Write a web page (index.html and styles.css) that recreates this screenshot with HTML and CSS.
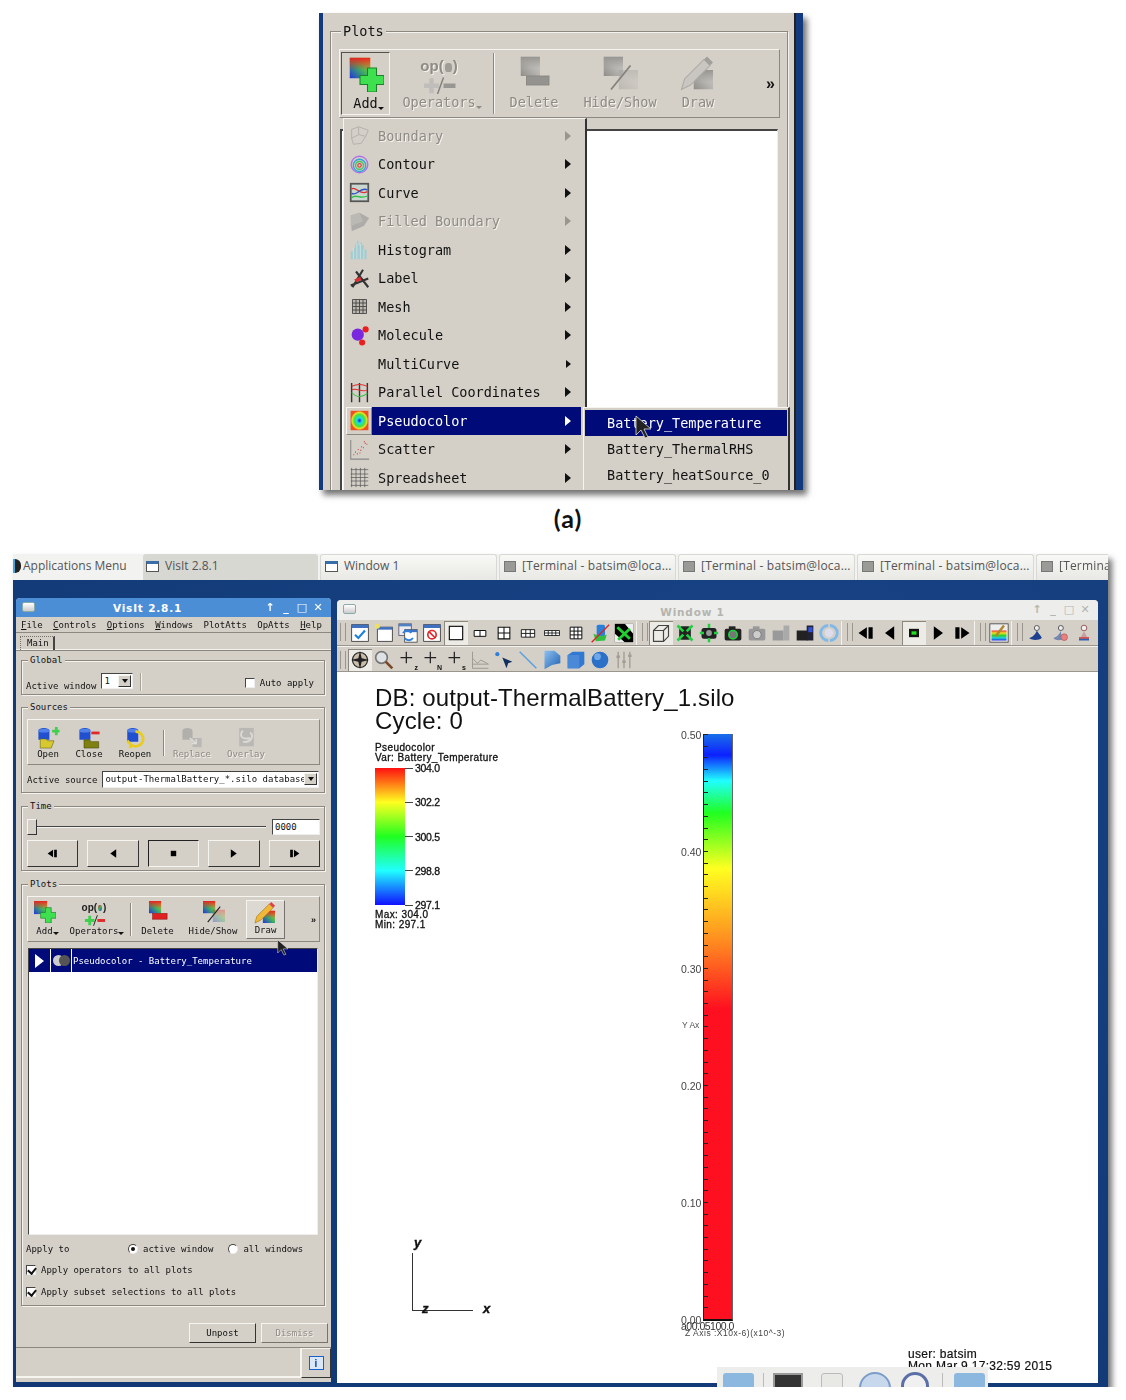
FILE: index.html
```html
<!DOCTYPE html>
<html lang="en">
<head>
    <meta charset="UTF-8">
    <title>VisIt plots</title>
    <link rel="stylesheet" href="styles.css">
</head>
<body>
    <!-- shared icons -->
    <svg class="defs" xmlns="http://www.w3.org/2000/svg">
        <defs>
            <linearGradient id="gx" x1="0" y1="1" x2="1" y2="0"><stop offset="0" stop-color="#2030e0"/><stop offset=".5" stop-color="#40b060"/><stop offset="1" stop-color="#f0c020"/></linearGradient>
            <linearGradient id="gy" x1="0" y1="0" x2="0" y2="1"><stop offset="0" stop-color="#e82020"/><stop offset=".6" stop-color="#e82020" stop-opacity="0"/></linearGradient>
            <radialGradient id="gp"><stop offset="0" stop-color="#1020e0"/><stop offset=".3" stop-color="#20e0e0"/><stop offset=".6" stop-color="#40e040"/><stop offset=".85" stop-color="#e8e020"/><stop offset="1" stop-color="#f05020"/></radialGradient>
            <linearGradient id="gb" x1="0" y1="0" x2="1" y2="1"><stop offset="0" stop-color="#8cc0f0"/><stop offset="1" stop-color="#2060b0"/></linearGradient>
            <linearGradient id="gr" x1="0" y1="0" x2="0" y2="1"><stop offset="0" stop-color="#f03030"/><stop offset=".25" stop-color="#f0e020"/><stop offset=".5" stop-color="#30d030"/><stop offset=".75" stop-color="#20d0e0"/><stop offset="1" stop-color="#2030e0"/></linearGradient>
        </defs>
        <symbol id="swatch" viewBox="0 0 14 14"><rect width="14" height="14" fill="url(#gx)"/><rect width="14" height="14" fill="url(#gy)"/></symbol>
        <symbol id="i-add" viewBox="0 0 24 24"><use href="#swatch" x="1" y="1" width="14" height="14"/><path d="M13 8h6v5h5v6h-5v5h-6v-5H8v-6h5z" fill="#3fe050" stroke="#1c8028" stroke-width=".7"/></symbol>
        <symbol id="i-op" viewBox="0 0 24 12"><path d="M2 5h3.500V1.500h3V5H12v3H8.500v3.500h-3V8H2z" fill="#3fd050"/><path d="M11 12l4-11" stroke="#222" stroke-width="1"/><path d="M15 5h8v3h-8z" fill="#e02828"/></symbol>
        <symbol id="i-del" viewBox="0 0 24 24"><use href="#swatch" x="3" y="1" width="13" height="13"/><rect x="7" y="14" width="15" height="6" fill="#e02020" stroke="#901010" stroke-width=".6"/></symbol>
        <symbol id="i-hide" viewBox="0 0 24 24"><use href="#swatch" x="1" y="1" width="13" height="13"/><use href="#swatch" x="11" y="10" width="13" height="13" opacity=".35"/><path d="M6 23L19 7" stroke="#222" stroke-width="1.2"/></symbol>
        <symbol id="i-draw" viewBox="0 0 24 24"><use href="#swatch" x="9" y="10" width="13" height="13"/><path d="M1 23l2-7L16 3l4 4L7 20z" fill="#f0b838" stroke="#a87820" stroke-width=".7"/><path d="M16 3l2-2 4 4-2 2z" fill="#e04040"/></symbol>
        <symbol id="m-bound" viewBox="0 0 24 24"><path d="M3 5l8-3 11 4-3 7-5 8-9 1-2-7zM3 15l8-4 8 2M11 2v9" fill="none" stroke="#8e8a84" stroke-width="1.1"/></symbol>
        <symbol id="m-contour" viewBox="0 0 24 24"><circle cx="12" cy="12" r="9.5" fill="none" stroke="#b070e8" stroke-width="1.6"/><circle cx="12" cy="13" r="7" fill="none" stroke="#30a8d8" stroke-width="1.6"/><circle cx="12" cy="13" r="4.5" fill="none" stroke="#50c060" stroke-width="1.6"/><circle cx="12" cy="13" r="2" fill="none" stroke="#e04040" stroke-width="1.4"/></symbol>
        <symbol id="m-curve" viewBox="0 0 24 24"><rect x="2" y="2" width="20" height="20" fill="#c8d8d0" stroke="#555" stroke-width="2"/><path d="M3 8c5-4 8 8 18 3" fill="none" stroke="#e03030" stroke-width="1.5"/><path d="M3 13c6 4 9-8 18-4" fill="none" stroke="#3050c0" stroke-width="1.5"/><path d="M3 18c5-5 9 2 18-2" fill="none" stroke="#30c040" stroke-width="1.5"/></symbol>
        <symbol id="m-filled" viewBox="0 0 24 24"><path d="M2 5l10-3 11 6-6 9-14 6z" fill="#84807a"/><path d="M2 5l10-3 4 10-14 5z" fill="#a09c96"/></symbol>
        <symbol id="m-hist" viewBox="0 0 24 24"><path d="M2 23v-9h3v-4h2v-5h2v-3h2v5h2V4h2v3h2v5h3v11z" fill="#a4ccd0"/><path d="M5 23V10M9 23V5M13 23V6M17 23V12" stroke="#d8e8e8" stroke-width=".8"/></symbol>
        <symbol id="m-label" viewBox="0 0 24 24"><path d="M4 22L16 2M8 4l14 18M2 20l20-8" stroke="#333" stroke-width="2.4" fill="none"/><path d="M6 13l7-3 1 4-6 2z" fill="#d83030"/></symbol>
        <symbol id="m-mesh" viewBox="0 0 24 24"><path d="M4 4h16v16H4zM4 8h16M4 12h16M4 16h16M8 4v16M12 4v16M16 4v16" fill="#bdb9b1" stroke="#444" stroke-width="1"/></symbol>
        <symbol id="m-mol" viewBox="0 0 24 24"><circle cx="10" cy="11" r="7" fill="#7a28e0"/><circle cx="19" cy="5" r="3.5" fill="#e82020"/><circle cx="15" cy="20" r="3.5" fill="#e82020"/></symbol>
        <symbol id="m-par" viewBox="0 0 24 24"><path d="M3 1v22M12 1v22M21 1v22" stroke="#333" stroke-width="1.6"/><path d="M3 5c6-3 12-3 18 0M3 9c6-3 12 4 18 0" stroke="#e03030" stroke-width="1.2" fill="none"/><path d="M3 12c6 6 12 6 18 1" stroke="#30c040" stroke-width="1.2" fill="none"/></symbol>
        <symbol id="m-pseudo" viewBox="0 0 24 24"><rect x="2" y="1" width="20" height="22" fill="#f05020"/><rect x="2" y="1" width="20" height="22" fill="url(#gp)"/></symbol>
        <symbol id="m-scat" viewBox="0 0 24 24"><path d="M2 1v22h21" stroke="#888" stroke-width="1.2" fill="none"/><path d="M5 18h1M7 15h1M9 17h1M10 12h1M13 13h1M14 9h1M16 10h1M18 5h1M20 6h1M12 16h1M17 3h1" stroke="#c83838" stroke-width="1.4"/></symbol>
        <symbol id="m-sheet" viewBox="0 0 24 24"><path d="M2 3h20M2 8h20M2 12h20M2 16h20M2 21h20M3 1v22M8 1v22M13 1v22M18 1v22" stroke="#555" stroke-width=".8"/></symbol>
        <symbol id="s-open" viewBox="0 0 24 24"><path d="M1 4c0-4 12-4 12 0v10H1z" fill="#2050d0"/><ellipse cx="7" cy="4" rx="6" ry="2" fill="#5080e8"/><path d="M3 13h6l2 2h7l-3 8H3z" fill="#d8c830" stroke="#606010" stroke-width=".6"/><path d="M16 3h3V0h3v3h2v3h-2v3h-3V6h-3z" fill="#40d050"/></symbol>
        <symbol id="s-close" viewBox="0 0 24 24"><path d="M1 4c0-4 12-4 12 0v10H1z" fill="#2050d0"/><ellipse cx="7" cy="4" rx="6" ry="2" fill="#5080e8"/><path d="M6 14h6l2 2h8v7H6z" fill="#808010" stroke="#404008" stroke-width=".6"/><path d="M14 5h9v3h-9z" fill="#e02828"/></symbol>
        <symbol id="s-reopen" viewBox="0 0 24 24"><path d="M3 4c0-4 12-4 12 0v12H3z" fill="#2050d0"/><ellipse cx="9" cy="4" rx="6" ry="2" fill="#5080e8"/><path d="M12 5a8 8 0 1 1-5 14M7 19l-4-4M7 19l-1 4" fill="none" stroke="#e8cc20" stroke-width="3"/></symbol>
        <symbol id="s-replace" viewBox="0 0 24 24"><path d="M1 4c0-4 11-4 11 0v10H1z" fill="#8e8a84"/><rect x="12" y="12" width="10" height="10" fill="#a09c96"/><path d="M9 12l7 6m0-5v5h-5" stroke="#eee" stroke-width="1.6" fill="none"/></symbol>
        <symbol id="s-overlay" viewBox="0 0 24 24"><rect x="4" y="1" width="16" height="20" fill="#a09c96"/><path d="M8 4c-5 6 0 10 8 8m0-6c5 4 0 12-8 10" stroke="#e8e6e0" stroke-width="2" fill="none"/></symbol>
        <symbol id="t-first" viewBox="0 0 24 24"><path d="M13 5v14L3 12zM15 5h5v14h-5z"/></symbol>
        <symbol id="t-prev" viewBox="0 0 24 24"><path d="M17 4v16L6 12z"/></symbol>
        <symbol id="t-stop" viewBox="0 0 24 24"><path d="M7 7h10v10H7z"/></symbol>
        <symbol id="t-next" viewBox="0 0 24 24"><path d="M7 4v16l11-8z"/></symbol>
        <symbol id="t-last" viewBox="0 0 24 24"><path d="M11 5v14l10-7zM4 5h5v14H4z"/></symbol>
        <symbol id="v-stop" viewBox="0 0 24 24"><rect x="6" y="7" width="12" height="10" fill="#111"/><rect x="9" y="10" width="6" height="4" fill="#20e020"/></symbol>
        <symbol id="v-check" viewBox="0 0 24 24"><rect x="2" y="2" width="20" height="20" fill="#fff" stroke="#333"/><rect x="2" y="2" width="20" height="4" fill="#4070c0"/><path d="M6 14l4 4 8-9" fill="none" stroke="#2080e0" stroke-width="2.6"/></symbol>
        <symbol id="v-new" viewBox="0 0 24 24"><rect x="4" y="5" width="18" height="17" fill="#fff" stroke="#333"/><rect x="4" y="5" width="18" height="3" fill="#4070c0"/><circle cx="4" cy="4" r="3" fill="#f0e060"/></symbol>
        <symbol id="v-copy" viewBox="0 0 24 24"><rect x="1" y="1" width="15" height="14" fill="#e8eaf0" stroke="#557"/><rect x="1" y="1" width="15" height="3" fill="#5080c0"/><rect x="8" y="8" width="15" height="15" fill="#fff" stroke="#444"/><rect x="8" y="8" width="15" height="3" fill="#4070c0"/><path d="M6 12a6 6 0 0 1 10 0M18 18a6 6 0 0 1-10 0" fill="none" stroke="#3080e0" stroke-width="2.2"/></symbol>
        <symbol id="v-clear" viewBox="0 0 24 24"><rect x="2" y="2" width="20" height="20" fill="#fff" stroke="#333"/><rect x="2" y="2" width="20" height="4" fill="#4070c0"/><circle cx="12" cy="14" r="5" fill="none" stroke="#e02828" stroke-width="2"/><path d="M8 10l8 8" stroke="#e02828" stroke-width="2"/></symbol>
        <symbol id="l-1" viewBox="0 0 24 24"><rect x="4" y="4" width="16" height="16" fill="#fff" stroke="#111" stroke-width="1.4"/></symbol>
        <symbol id="l-2" viewBox="0 0 24 24"><path d="M5 9h14v7H5zM12 9v7" fill="#fff" stroke="#111" stroke-width="1.2"/></symbol>
        <symbol id="l-4" viewBox="0 0 24 24"><path d="M5 5h14v14H5zM12 5v14M5 12h14" fill="#fff" stroke="#111" stroke-width="1.3"/></symbol>
        <symbol id="l-6" viewBox="0 0 24 24"><path d="M4 8h16v9H4zM4 12.500h16M9.300 8v9M14.700 8v9" fill="#fff" stroke="#111" stroke-width="1.1"/></symbol>
        <symbol id="l-8" viewBox="0 0 24 24"><path d="M3 9h18v6H3zM3 12h18M7.500 9v6M12 9v6M16.500 9v6" fill="#fff" stroke="#111"/></symbol>
        <symbol id="l-9" viewBox="0 0 24 24"><path d="M5 5h14v14H5zM5 9.700h14M5 14.300h14M9.700 5v14M14.300 5v14" fill="#fff" stroke="#111" stroke-width="1.2"/></symbol>
        <symbol id="v-spin" viewBox="0 0 24 24"><rect x="8" y="2" width="10" height="14" rx="2" fill="#2a80d8"/><path d="M4 13l8 3 8-2-2 7-11 1z" fill="#30c040"/><path d="M2 23L23 2" stroke="#e02020" stroke-width="1.6"/></symbol>
        <symbol id="v-inv" viewBox="0 0 24 24"><rect x="1" y="1" width="22" height="22" fill="#000"/><path d="M23 1v12L13 1zM1 23h12L1 13z" fill="#eee"/><path d="M4 5l15 14M19 7L5 20" stroke="#20d030" stroke-width="3.4"/></symbol>
        <symbol id="v-cube" viewBox="0 0 24 24"><path d="M3 9l6-6h12v13l-6 6H3zM3 9h12v13M15 9l6-6" fill="none" stroke="#444" stroke-width="1.4"/></symbol>
        <symbol id="c-1" viewBox="0 0 24 24"><rect x="5" y="4" width="14" height="16" rx="3" fill="#222"/><path d="M3 3l7 7M21 3l-7 7M3 21l7-7M21 21l-7-7" stroke="#20d040" stroke-width="3.2"/></symbol>
        <symbol id="c-2" viewBox="0 0 24 24"><rect x="3" y="6" width="18" height="13" rx="3" fill="#222"/><circle cx="12" cy="12" r="3.500" fill="#999"/><path d="M12 1v5M12 18v5M1 12h5M18 12h5" stroke="#20d040" stroke-width="3"/></symbol>
        <symbol id="c-3" viewBox="0 0 24 24"><rect x="2" y="7" width="20" height="14" rx="2" fill="#222"/><rect x="7" y="4" width="8" height="4" fill="#222"/><circle cx="12" cy="14" r="5" fill="#777" stroke="#20d040" stroke-width="2"/></symbol>
        <symbol id="c-4" viewBox="0 0 24 24"><rect x="2" y="7" width="20" height="14" rx="2" fill="#999"/><rect x="7" y="4" width="8" height="4" fill="#999"/><circle cx="12" cy="14" r="5" fill="#ccc" stroke="#777"/></symbol>
        <symbol id="c-5" viewBox="0 0 24 24"><rect x="2" y="9" width="13" height="12" fill="#999"/><rect x="15" y="3" width="7" height="18" fill="#aaa"/></symbol>
        <symbol id="c-6" viewBox="0 0 24 24"><rect x="2" y="9" width="13" height="12" fill="#222"/><rect x="14" y="3" width="8" height="18" fill="#223"/><rect x="16" y="5" width="5" height="6" fill="#3050e0"/></symbol>
        <symbol id="c-7" viewBox="0 0 24 24"><path d="M13 3a9 9 0 0 1 0 18M11 21a9 9 0 0 1 0-18" fill="none" stroke="#80b8e8" stroke-width="3.4"/><circle cx="12" cy="12" r="5" fill="#dde"/></symbol>
        <symbol id="v-paint" viewBox="0 0 24 24"><rect x="1" y="1" width="22" height="22" fill="#eee" stroke="#444"/><rect x="3" y="9" width="18" height="12" fill="url(#gr)"/><path d="M8 16L18 3" stroke="#b08830" stroke-width="3"/></symbol>
        <symbol id="p-1" viewBox="0 0 24 24"><circle cx="13" cy="6" r="3" fill="#eee" stroke="#444"/><path d="M13 9c-1 4-5 8-9 9 2 3 12 3 15 0-1-3-4-5-6-9z" fill="#1c3f90"/></symbol>
        <symbol id="p-2" viewBox="0 0 24 24"><circle cx="13" cy="6" r="3" fill="#eee" stroke="#444"/><path d="M13 9c-1 4-5 8-9 9 2 3 8 3 10 2l-1-11z" fill="#7488b0"/><circle cx="17" cy="17" r="4" fill="#e88080" stroke="#a04040" stroke-width=".6"/></symbol>
        <symbol id="p-3" viewBox="0 0 24 24"><circle cx="12" cy="6" r="3.400" fill="#eee" stroke="#844"/><path d="M12 10l-4 7h8z" fill="#c8a0a0"/><path d="M6 17h12v2H6z" fill="#d03030"/><path d="M6 19h12v2H6z" fill="#3060b0"/></symbol>
        <symbol id="n-compass" viewBox="0 0 24 24"><circle cx="12" cy="12" r="9" fill="#c8bda8" stroke="#222" stroke-width="1.4"/><path d="M12 1l2 9 9 2-9 2-2 9-2-9-9-2 9-2z" fill="#222"/></symbol>
        <symbol id="n-mag" viewBox="0 0 24 24"><circle cx="9" cy="9" r="7" fill="#dfe2e4" stroke="#777" stroke-width="2"/><path d="M14 14l8 8" stroke="#7a4a28" stroke-width="3.2"/></symbol>
        <symbol id="n-plus" viewBox="0 0 24 24"><path d="M10 2v14M3 9h14" stroke="#222" stroke-width="1.5"/></symbol>
        <symbol id="n-graph" viewBox="0 0 24 24"><path d="M3 2v20h19M3 10l6 6 4-4 9 5M3 17h19" stroke="#9a968e" stroke-width="1.1" fill="none"/></symbol>
        <symbol id="n-pick" viewBox="0 0 24 24"><circle cx="4" cy="5" r="2.500" fill="#3080d8"/><path d="M10 9l12 5-5 2-2 6z" fill="#113060"/></symbol>
        <symbol id="n-line" viewBox="0 0 24 24"><path d="M2 2l20 20" stroke="#58a0e0" stroke-width="1.8"/></symbol>
        <symbol id="n-plane" viewBox="0 0 24 24"><path d="M3 1h12l7 6v9l-10 2-9 5z" fill="url(#gb)"/></symbol>
        <symbol id="n-box" viewBox="0 0 24 24"><path d="M2 6l6-4h14v15l-6 5H2z" fill="#3078d0"/><path d="M2 6h14v16H2z" fill="#4a88d8"/></symbol>
        <symbol id="n-ball" viewBox="0 0 24 24"><circle cx="12" cy="12" r="10" fill="#2c70c8"/><circle cx="9" cy="8" r="4" fill="#70a8e8"/></symbol>
        <symbol id="n-slide" viewBox="0 0 24 24"><path d="M5 2v20M12 2v20M19 2v20" stroke="#a09c94" stroke-width="1.6"/><path d="M3 8h4M10 14h4M17 7h4" stroke="#a09c94" stroke-width="3"/></symbol>
        <symbol id="cursor" viewBox="0 0 16 24"><path d="M1 1v19l5-5 4 8 3-1-4-8h7z" fill="#222" stroke="#ddd" stroke-width=".8"/></symbol>
    </svg>

    <!-- (a) plots menu -->
    <div class="shot shot-top">
        <div class="shot-inner">
            <div class="top-panel">
                <div class="group top-group">
                    <span class="legend">Plots</span>
                    <div class="toolbar top-toolbar">
                        <div class="tb tb-pressed top-add"><svg class="ic"><use href="#i-add"/></svg><span class="drop">Add</span></div>
                        <div class="tb off top-ops"><span class="op-text">op(<i></i>)</span><svg class="op-ic"><use href="#i-op"/></svg><span class="drop">Operators</span></div>
                        <i class="tb-sep"></i>
                        <div class="tb off top-del"><svg class="ic"><use href="#i-del"/></svg><span>Delete</span></div>
                        <div class="tb off top-hide"><svg class="ic"><use href="#i-hide"/></svg><span>Hide/Show</span></div>
                        <div class="tb off top-draw"><svg class="ic"><use href="#i-draw"/></svg><span>Draw</span></div>
                        <b class="more">»</b>
                    </div>
                    <div class="plot-list top-list"></div>
                </div>
            </div>

            <div class="menu">
                <div class="mrow off"><span class="mico"><svg><use href="#m-bound"/></svg></span><span class="mbody">Boundary<i class="arrow"></i></span></div>
                <div class="mrow"><span class="mico"><svg><use href="#m-contour"/></svg></span><span class="mbody">Contour<i class="arrow"></i></span></div>
                <div class="mrow"><span class="mico"><svg><use href="#m-curve"/></svg></span><span class="mbody">Curve<i class="arrow"></i></span></div>
                <div class="mrow off"><span class="mico"><svg><use href="#m-filled"/></svg></span><span class="mbody">Filled Boundary<i class="arrow"></i></span></div>
                <div class="mrow"><span class="mico"><svg><use href="#m-hist"/></svg></span><span class="mbody">Histogram<i class="arrow"></i></span></div>
                <div class="mrow"><span class="mico"><svg><use href="#m-label"/></svg></span><span class="mbody">Label<i class="arrow"></i></span></div>
                <div class="mrow"><span class="mico"><svg><use href="#m-mesh"/></svg></span><span class="mbody">Mesh<i class="arrow"></i></span></div>
                <div class="mrow"><span class="mico"><svg><use href="#m-mol"/></svg></span><span class="mbody">Molecule<i class="arrow"></i></span></div>
                <div class="mrow"><span class="mico"></span><span class="mbody">MultiCurve<i class="arrow arrow-sm"></i></span></div>
                <div class="mrow"><span class="mico"><svg><use href="#m-par"/></svg></span><span class="mbody">Parallel Coordinates<i class="arrow"></i></span></div>
                <div class="mrow sel"><span class="mico"><svg><use href="#m-pseudo"/></svg></span><span class="mbody">Pseudocolor<i class="arrow"></i></span></div>
                <div class="mrow"><span class="mico"><svg><use href="#m-scat"/></svg></span><span class="mbody">Scatter<i class="arrow"></i></span></div>
                <div class="mrow"><span class="mico"><svg><use href="#m-sheet"/></svg></span><span class="mbody">Spreadsheet<i class="arrow"></i></span></div>
            </div>

            <div class="submenu">
                <div class="subrow sel">Battery_Temperature</div>
                <div class="subrow">Battery_ThermalRHS</div>
                <div class="subrow">Battery_heatSource_0</div>
            </div>
            <svg class="cursor cursor-top"><use href="#cursor"/></svg>
        </div>
    </div>

    <div class="caption">(a)</div>

    <!-- desktop with the main window and the viewer -->
    <div class="shot shot-bot">
        <div class="shot-inner desktop">
            <div class="taskbar">
                <div class="task task-apps"><i class="apps-logo"></i>Applications Menu</div>
                <div class="task active"><i class="task-win"></i>VisIt 2.8.1</div>
                <div class="task"><i class="task-win"></i>Window 1</div>
                <div class="task term"><i class="task-term"></i>[Terminal - batsim@loca...</div>
                <div class="task term"><i class="task-term"></i>[Terminal - batsim@loca...</div>
                <div class="task term"><i class="task-term"></i>[Terminal - batsim@loca...</div>
                <div class="task term task-last"><i class="task-term"></i>[Terminal - batsim@loca...</div>
            </div>

            <div class="window visit-win">
                <div class="titlebar">
                    <i class="win-icon"></i>
                    <span class="title-text">VisIt 2.8.1</span>
                    <span class="win-btns"><span>↑</span><span>_</span><span>□</span><span>✕</span></span>
                </div>
                <div class="menubar">
                    <span><u>F</u>ile</span><span><u>C</u>ontrols</span><span><u>O</u>ptions</span><span><u>W</u>indows</span><span>PlotAtts</span><span>OpAtts</span><span><u>H</u>elp</span>
                </div>
                <div class="tabs"><span class="tab">Main</span></div>

                <div class="group global">
                    <span class="legend">Global</span>
                    <span>Active window</span>
                    <span class="combo combo-win">1<i class="combo-btn"></i></span>
                    <i class="vsep"></i>
                    <label class="check-item auto"><i class="check"></i>Auto apply</label>
                </div>

                <div class="group sources">
                    <span class="legend">Sources</span>
                    <div class="toolbar src-toolbar">
                        <div class="tb src-open"><svg class="ic"><use href="#s-open"/></svg><span>Open</span></div>
                        <div class="tb src-close"><svg class="ic"><use href="#s-close"/></svg><span>Close</span></div>
                        <div class="tb src-reopen"><svg class="ic"><use href="#s-reopen"/></svg><span>Reopen</span></div>
                        <i class="tb-sep"></i>
                        <div class="tb off src-replace"><svg class="ic"><use href="#s-replace"/></svg><span>Replace</span></div>
                        <div class="tb off src-overlay"><svg class="ic"><use href="#s-overlay"/></svg><span>Overlay</span></div>
                    </div>
                    <div class="source-row">
                        <span>Active source</span>
                        <span class="combo combo-src">output-ThermalBattery_*.silo database<i class="combo-btn"></i></span>
                    </div>
                </div>

                <div class="group time">
                    <span class="legend">Time</span>
                    <div class="slider-row">
                        <i class="slider-handle"></i><i class="slider-track"></i>
                        <span class="time-field">0000</span>
                    </div>
                    <div class="transport">
                        <button class="vcr"><svg><use href="#t-first"/></svg></button>
                        <button class="vcr"><svg><use href="#t-prev"/></svg></button>
                        <button class="vcr down"><svg><use href="#t-stop"/></svg></button>
                        <button class="vcr"><svg><use href="#t-next"/></svg></button>
                        <button class="vcr"><svg><use href="#t-last"/></svg></button>
                    </div>
                </div>

                <div class="group plots">
                    <span class="legend">Plots</span>
                    <div class="toolbar plot-toolbar">
                        <div class="tb pl-add"><svg class="ic"><use href="#i-add"/></svg><span class="drop">Add</span></div>
                        <div class="tb pl-ops"><span class="op-text">op(<i></i>)</span><svg class="op-ic"><use href="#i-op"/></svg><span class="drop">Operators</span></div>
                        <i class="tb-sep"></i>
                        <div class="tb pl-del"><svg class="ic"><use href="#i-del"/></svg><span>Delete</span></div>
                        <div class="tb pl-hide"><svg class="ic"><use href="#i-hide"/></svg><span>Hide/Show</span></div>
                        <div class="tb tb-raised pl-draw"><svg class="ic"><use href="#i-draw"/></svg><span>Draw</span></div>
                        <b class="more">»</b>
                    </div>
                    <div class="plot-list">
                        <div class="plot-item">
                            <span class="plot-play"><i></i></span>
                            <span class="plot-eye"><i></i><i></i></span>
                            <span>Pseudocolor - Battery_Temperature</span>
                        </div>
                    </div>
                    <div class="apply-row">
                        <span class="apply-label">Apply to</span>
                        <label class="check-item radio-a"><i class="radio on"></i>active window</label>
                        <label class="check-item radio-b"><i class="radio"></i>all windows</label>
                    </div>
                    <div class="apply-row"><label class="check-item"><i class="check on"></i>Apply operators to all plots</label></div>
                    <div class="apply-row"><label class="check-item"><i class="check on"></i>Apply subset selections to all plots</label></div>
                </div>

                <div class="actions">
                    <button class="push">Unpost</button>
                    <button class="push off">Dismiss</button>
                </div>
                <div class="statusbar">
                    <span class="status-field"></span>
                    <span class="status-info"><i>i</i></span>
                </div>
            </div>

            <div class="window viz-win">
                <div class="titlebar viz-title">
                    <i class="win-icon"></i>
                    <span class="title-text">Window 1</span>
                    <span class="win-btns"><span>↑</span><span>_</span><span>□</span><span>✕</span></span>
                </div>
                <div class="vbar">
                    <i class="grip grip-first"></i>
                    <span class="vc"><svg><use href="#v-check"/></svg></span>
                    <span class="vc"><svg><use href="#v-new"/></svg></span>
                    <span class="vc"><svg><use href="#v-copy"/></svg></span>
                    <span class="vc"><svg><use href="#v-clear"/></svg></span>
                    <span class="vc on"><svg><use href="#l-1"/></svg></span>
                    <span class="vc"><svg><use href="#l-2"/></svg></span>
                    <span class="vc"><svg><use href="#l-4"/></svg></span>
                    <span class="vc"><svg><use href="#l-6"/></svg></span>
                    <span class="vc"><svg><use href="#l-8"/></svg></span>
                    <span class="vc"><svg><use href="#l-9"/></svg></span>
                    <span class="vc"><svg><use href="#v-spin"/></svg></span>
                    <span class="vc"><svg><use href="#v-inv"/></svg></span>
                    <i class="grip"></i>
                    <span class="vc on"><svg><use href="#v-cube"/></svg></span>
                    <span class="vc"><svg><use href="#c-1"/></svg></span>
                    <span class="vc"><svg><use href="#c-2"/></svg></span>
                    <span class="vc"><svg><use href="#c-3"/></svg></span>
                    <span class="vc"><svg><use href="#c-4"/></svg></span>
                    <span class="vc"><svg><use href="#c-5"/></svg></span>
                    <span class="vc"><svg><use href="#c-6"/></svg></span>
                    <span class="vc"><svg><use href="#c-7"/></svg></span>
                    <i class="grip"></i>
                    <span class="vc"><svg><use href="#t-first"/></svg></span>
                    <span class="vc"><svg><use href="#t-prev"/></svg></span>
                    <span class="vc on"><svg><use href="#v-stop"/></svg></span>
                    <span class="vc"><svg><use href="#t-next"/></svg></span>
                    <span class="vc"><svg><use href="#t-last"/></svg></span>
                    <i class="grip"></i>
                    <span class="vc"><svg><use href="#v-paint"/></svg></span>
                    <i class="grip"></i>
                    <span class="vc"><svg><use href="#p-1"/></svg></span>
                    <span class="vc"><svg><use href="#p-2"/></svg></span>
                    <span class="vc"><svg><use href="#p-3"/></svg></span>
                </div>
                <div class="vbar">
                    <i class="grip grip-first"></i>
                    <span class="vc on"><svg><use href="#n-compass"/></svg></span>
                    <span class="vc"><svg><use href="#n-mag"/></svg></span>
                    <span class="vc nav"><svg><use href="#n-plus"/></svg><b>z</b></span>
                    <span class="vc nav"><svg><use href="#n-plus"/></svg><b>N</b></span>
                    <span class="vc nav"><svg><use href="#n-plus"/></svg><b>s</b></span>
                    <span class="vc"><svg><use href="#n-graph"/></svg></span>
                    <span class="vc"><svg><use href="#n-pick"/></svg></span>
                    <span class="vc"><svg><use href="#n-line"/></svg></span>
                    <span class="vc"><svg><use href="#n-plane"/></svg></span>
                    <span class="vc"><svg><use href="#n-box"/></svg></span>
                    <span class="vc"><svg><use href="#n-ball"/></svg></span>
                    <span class="vc"><svg><use href="#n-slide"/></svg></span>
                </div>

                <div class="canvas">
                    <div class="db-title">DB: output-ThermalBattery_1.silo<br>Cycle: 0</div>
                    <div class="lg-head">Pseudocolor<br>Var: Battery_Temperature</div>
                    <div class="lg-bar"></div>
                    <div class="lg-ticks"><span>304.0</span><span>302.2</span><span>300.5</span><span>298.8</span><span>297.1</span></div>
                    <div class="lg-foot">Max: 304.0<br>Min: 297.1</div>

                    <div class="y-labels"><span>0.50</span><span>0.40</span><span>0.30</span><span>0.20</span><span>0.10</span><span>0.00</span></div>
                    <div class="y-title">Y Ax</div>
                    <div class="data-bar"></div>
                    <div class="x-labels">a00.05100.0</div>
                    <div class="x-title">Z Axis :X10x-6)(x10^-3)</div>

                    <i class="triad-y"></i><i class="triad-x"></i>
                    <b class="triad-lbl lbl-y">y</b><b class="triad-lbl lbl-z">z</b><b class="triad-lbl lbl-x">x</b>

                    <div class="user-info">user: batsim<br>Mon Mar 9 17:32:59 2015</div>
                </div>
            </div>

            <div class="dock">
                <i class="d-folder"></i><i class="d-sep"></i><i class="d-term"></i><i class="d-file"></i><i class="d-globe"></i><i class="d-mag"></i><i class="d-sep"></i><i class="d-folder"></i>
            </div>
            <svg class="cursor cursor-bot"><use href="#cursor"/></svg>
        </div>
    </div>
</body>
</html>
```
FILE: styles.css
```css
* {
    box-sizing: border-box;
}
body {
    margin: 0;
    background-color: #ffffff;
    font-family: "DejaVu Sans Mono", monospace;
    color: #111;
}
i {
    display: block;
    font-style: normal;
}
button {
    font: inherit;
    color: inherit;
}
.defs {
    position: absolute;
    width: 0;
    height: 0;
}

/* screenshots */
.shot {
    overflow: hidden;
    background-color: #123a7c;
    box-shadow: 4px 5px 6px rgba(0, 0, 0, 0.55);
}
.shot-inner {
    position: relative;
    width: 100%;
    height: 100%;
    filter: blur(0.45px);
}
.shot-top {
    width: 484px;
    height: 477px;
    margin: 13px 0 0 319px;
}
.shot-bot {
    width: 1095px;
    height: 833px;
    margin-left: 13px;
}
.caption {
    height: 64px;
    padding: 14px 0 0 10px;
    text-align: center;
    font: bold 25px/28px Lato, sans-serif;
    letter-spacing: 1px;
}

/* shared panel parts */
.group {
    position: relative;
    border: 1px solid #8c8880;
    box-shadow: 1px 1px 0 #f4f2ec, inset 1px 1px 0 #f4f2ec;
}
.legend {
    position: absolute;
    top: -7px;
    left: 6px;
    padding: 0 2px;
    line-height: 12px;
    background-color: #d4d0c8;
}
.toolbar {
    display: flex;
    align-items: stretch;
    border: 1px solid;
    border-color: #f6f4ef #8c8880 #8c8880 #f6f4ef;
}
.tb {
    display: flex;
    flex: none;
    flex-direction: column;
    align-items: center;
    justify-content: space-between;
}
.ic {
    display: block;
}
.off {
    color: #8f8b85;
    text-shadow: 1px 1px 0 #f4f2ec;
}
.off svg {
    filter: grayscale(1) opacity(0.45);
}
.drop {
    position: relative;
}
.drop::after {
    content: "";
    position: absolute;
    right: -6px;
    bottom: 1px;
    border: 3px solid transparent;
    border-top-color: currentColor;
    border-bottom: 0;
}
.op-text {
    display: flex;
    align-items: center;
    font-family: "Liberation Sans", sans-serif;
    font-weight: bold;
    color: #222;
}
.op-text i {
    background: linear-gradient(135deg, #d03030, #40b060, #2040d0);
    border-radius: 40%;
}
.off .op-text {
    color: #8f8b85;
}
.off .op-text i {
    background: #a09c96;
}
.tb-sep {
    flex: none;
    width: 2px;
    margin: 3px;
    background-color: #8c8880;
    border-right: 1px solid #f6f4ef;
}
.more {
    margin: auto 3px auto auto;
    font-family: "Liberation Sans", sans-serif;
}
.plot-list {
    background-color: #ffffff;
    border: 1px solid;
    border-color: #444 #eee #eee #444;
}
.cursor {
    position: absolute;
    width: 16px;
    height: 24px;
}

/* (a) */
.shot-top .shot-inner {
    padding: 0 7px 0 4px;
}
.top-panel {
    height: 100%;
    padding: 18px 6px 0 7px;
    font-size: 13.5px;
    background-color: #d4d0c8;
    border-right: 2px solid #222;
}
.top-group {
    height: 500px;
    padding: 17px 7px 0 8px;
}
.top-group .legend {
    left: 10px;
    top: -9px;
    line-height: 16px;
}
.top-toolbar {
    height: 69px;
    padding: 2px 0 2px 1px;
    line-height: 16px;
}
.top-toolbar .ic {
    width: 36px;
    height: 36px;
    margin-top: 3px;
}
.top-toolbar .op-text {
    height: 18px;
    margin-top: 5px;
    font-size: 15px;
}
.top-toolbar .op-text i {
    width: 7px;
    height: 9px;
    margin: 2px 1px 0;
}
.top-toolbar .op-ic {
    width: 36px;
    height: 18px;
}
.top-add {
    width: 49px;
    padding-bottom: 3px;
}
.tb-pressed {
    border: 1px solid;
    border-color: #55524c #f6f4ef #f6f4ef #55524c;
}
.top-ops { width: 98px; padding-bottom: 5px; }
.top-del { width: 66px; margin-left: 1px; padding-bottom: 5px; }
.top-hide { width: 90px; margin-left: 8px; padding-bottom: 5px; }
.top-draw { width: 56px; margin-left: 5px; padding-bottom: 5px; }
.top-toolbar .tb-sep { margin: 1px 5px; }
.top-toolbar .more { font-size: 16px; margin-right: 4px; }
.top-list {
    height: 400px;
    margin: 11px 2px 0 1px;
    border-top-width: 2px;
    border-left-width: 2px;
}
.menu {
    position: absolute;
    left: 24px;
    top: 105px;
    width: 244px;
    height: 380px;
    display: grid;
    grid-auto-rows: 28.5px;
    align-content: start;
    padding: 2.5px 4px 0 2px;
    font-size: 13.5px;
    background-color: #d4d0c8;
    border-top: 1px solid #f6f4ef;
    border-left: 1px solid #f6f4ef;
    border-right: 2px solid #333;
}
.mrow {
    display: flex;
    align-items: center;
}
.mico {
    flex: none;
    display: flex;
    align-items: center;
    justify-content: center;
    width: 26px;
    height: 100%;
}
.mico svg {
    width: 21px;
    height: 21px;
}
.mbody {
    flex: 1;
    display: flex;
    align-items: center;
    height: 100%;
    padding: 0 10px 0 6px;
}
.arrow {
    margin-left: auto;
    border: 5px solid transparent;
    border-left: 6px solid #111;
    border-right: 0;
}
.arrow-sm {
    border-width: 4px;
    border-left-width: 5px;
    border-right-width: 0;
}
.off .arrow {
    border-left-color: #9a968e;
}
.mrow.sel .mico {
    border: 1px solid;
    border-color: #f6f4ef #8c8880 #8c8880 #f6f4ef;
}
.mrow.sel .mbody {
    color: #ffffff;
    background-color: #000a78;
}
.mrow.sel .arrow {
    border-left-color: #ffffff;
}
.submenu {
    position: absolute;
    left: 264px;
    top: 394px;
    width: 207px;
    height: 90px;
    padding: 2px 1px 0;
    font-size: 13.5px;
    background-color: #d4d0c8;
    border-top: 1px solid #f6f4ef;
    border-left: 1px solid #f6f4ef;
    border-right: 2px solid #333;
}
.subrow {
    height: 26px;
    padding-left: 22px;
    line-height: 26px;
}
.subrow.sel {
    color: #ffffff;
    background-color: #000a78;
}
.cursor-top {
    left: 316px;
    top: 402px;
}

/* desktop */
.desktop {
    background: radial-gradient(ellipse at 70% 20%, #174284, #113874);
}
.taskbar {
    display: flex;
    gap: 2px;
    height: 26px;
    font: 12px/22px "Open Sans", sans-serif;
    color: #555;
    background-color: #f2f2f0;
}
.task {
    display: flex;
    flex: none;
    align-items: center;
    gap: 6px;
    width: 177px;
    padding: 0 0 3px 4px;
    background: linear-gradient(#f8f8f6, #e8e8e4);
    border: 1px solid #d8d8d4;
    border-width: 1px 1px 0;
    border-radius: 3px 3px 0 0;
    white-space: nowrap;
}
.task-apps {
    width: 128px;
    gap: 2px;
    padding-left: 0;
    background: none;
    border: 0;
}
.task.active {
    width: 175px;
    padding-left: 2px;
    background: #d8d8d2;
}
.task.term {
    letter-spacing: 0.2px;
}
.task-last {
    width: 75px;
    overflow: hidden;
    border-right: 0;
}
.apps-logo {
    flex: none;
    width: 8px;
    height: 14px;
    background-color: #222;
    border-left: 2px solid #4aa0d8;
    border-radius: 0 6px 6px 0;
}
.task-win {
    flex: none;
    width: 13px;
    height: 11px;
    background-color: #fff;
    border: 1px solid #555;
    border-top: 3px solid #3a6ea8;
}
.task-term {
    flex: none;
    width: 12px;
    height: 11px;
    background-color: #9a9a96;
    border: 1px solid #777;
}
.window {
    position: absolute;
    background-color: #d4d0c8;
}
.visit-win {
    left: 3px;
    top: 44px;
    width: 315px;
    height: 784px;
    font-size: 9px;
    border-radius: 4px 4px 0 0;
    overflow: hidden;
}
.viz-win {
    left: 324px;
    top: 46px;
    width: 761px;
    height: 783px;
    border-radius: 4px 4px 0 0;
    overflow: hidden;
}
.titlebar {
    position: relative;
    display: flex;
    align-items: center;
    height: 19px;
    padding-top: 1px;
    color: #ffffff;
    font: bold 10.5px "DejaVu Sans", sans-serif;
    letter-spacing: 0.8px;
    background-color: #4c8ed6;
}
.win-icon {
    position: absolute;
    left: 6px;
    top: 4px;
    width: 13px;
    height: 10px;
    background: linear-gradient(#fff, #ccc);
    border: 1px solid #8aa;
    border-radius: 2px;
}
.title-text {
    flex: 1;
    text-align: center;
    padding-right: 52px;
}
.win-btns {
    position: absolute;
    right: 5px;
    top: 3px;
    display: flex;
    font-size: 11px;
    letter-spacing: 0;
    line-height: 13px;
}
.win-btns span {
    width: 16px;
    text-align: center;
}
.viz-title {
    height: 20px;
    padding-top: 3px;
    color: #b4b4b0;
    background-color: #ededeb;
}
.viz-title .title-text {
    padding-right: 50px;
}
.menubar {
    display: flex;
    gap: 10.4px;
    height: 16px;
    padding-left: 5px;
    line-height: 16px;
    border-bottom: 1px solid #8c8880;
}
.tabs {
    height: 17px;
    padding: 3px 0 0 4px;
    border-bottom: 1px solid #f4f2ec;
    box-shadow: 0 1px 0 #8c8880;
}
.tab {
    display: block;
    width: 35px;
    height: 14px;
    padding-left: 6px;
    line-height: 13px;
    border: 1px dotted #77736c;
    border-right: 2px solid #444;
    border-bottom: 0;
}
.global {
    display: flex;
    align-items: flex-end;
    width: 304px;
    height: 35px;
    margin: 10px 0 0 5px;
    padding: 0 5px 3px 4px;
}
.combo {
    position: relative;
    display: block;
    height: 16px;
    padding-left: 2px;
    line-height: 14px;
    background-color: #ffffff;
    border: 1px solid;
    border-color: #444 #eee #eee #444;
    overflow: hidden;
    white-space: nowrap;
}
.combo-btn {
    position: absolute;
    right: 1px;
    top: 1px;
    width: 13px;
    height: 12px;
    background: #d4d0c8;
    border: 1px solid;
    border-color: #f6f4ef #333 #333 #f6f4ef;
}
.combo-btn::after {
    content: "";
    position: absolute;
    left: 3px;
    top: 3px;
    border: 3px solid transparent;
    border-top: 4px solid #111;
    border-bottom: 0;
}
.combo-win {
    width: 32px;
    margin: 0 0 2px 5px;
}
.vsep {
    width: 2px;
    height: 18px;
    margin-left: 7px;
    background-color: #a8a49c;
    border-right: 1px solid #f4f2ec;
}
.check-item {
    display: flex;
    align-items: center;
    gap: 5px;
}
.auto {
    margin: 0 5px 3px auto;
}
.check {
    position: relative;
    width: 10px;
    height: 10px;
    background-color: #ffffff;
    border: 1px solid;
    border-color: #444 #eee #eee #444;
}
.check.on::after {
    content: "";
    position: absolute;
    left: 2px;
    top: 0;
    width: 4px;
    height: 6px;
    border: solid #111;
    border-width: 0 2px 2px 0;
    transform: rotate(40deg);
}
.radio {
    position: relative;
    width: 10px;
    height: 10px;
    background-color: #ffffff;
    border: 1px solid;
    border-color: #444 #eee #eee #444;
    border-radius: 50%;
}
.radio.on::after {
    content: "";
    position: absolute;
    left: 2px;
    top: 2px;
    width: 4px;
    height: 4px;
    background-color: #111;
    border-radius: 50%;
}
.sources {
    width: 304px;
    height: 86px;
    margin: 12px 0 0 5px;
    padding: 11px 4px 0 5px;
}
.src-toolbar {
    height: 46px;
    padding: 7px 0 5px;
}
.src-toolbar .ic {
    width: 23px;
    height: 23px;
}
.src-open { width: 40px; }
.src-close { width: 42px; }
.src-reopen { width: 50px; }
.src-replace { width: 48px; }
.src-overlay { width: 50px; margin-left: 5px; }
.source-row {
    display: flex;
    align-items: center;
    gap: 5px;
    margin-top: 6px;
}
.combo-src {
    flex: 1;
    height: 17px;
    line-height: 15px;
    margin-right: 1px;
}
.time {
    width: 304px;
    height: 65px;
    margin: 13px 0 0 5px;
    padding: 12px 4px 0 5px;
}
.slider-row {
    display: flex;
    align-items: center;
    height: 16px;
}
.slider-handle {
    flex: none;
    width: 10px;
    height: 16px;
    border: 1px solid;
    border-color: #f6f4ef #333 #333 #f6f4ef;
}
.slider-track {
    flex: 1;
    height: 2px;
    background-color: #444;
    border-bottom: 1px solid #f4f2ec;
}
.time-field {
    width: 48px;
    height: 16px;
    margin-left: 6px;
    padding-left: 2px;
    line-height: 14px;
    background-color: #ffffff;
    border: 1px solid;
    border-color: #444 #eee #eee #444;
}
.transport {
    display: flex;
    gap: 9px;
    margin-top: 5px;
}
.vcr {
    flex: 1;
    display: flex;
    align-items: center;
    justify-content: center;
    height: 27px;
    padding: 0;
    background-color: #d4d0c8;
    border: 1px solid;
    border-color: #f6f4ef #333 #333 #f6f4ef;
}
.vcr svg {
    width: 13px;
    height: 13px;
}
.vcr.down {
    border-color: #222 #f6f4ef #f6f4ef #222;
}
.plots {
    width: 304px;
    height: 422px;
    margin: 13px 0 0 5px;
    padding: 11px 4px 0 5px;
}
.plot-toolbar {
    height: 46px;
    padding: 3px 0 2px;
}
.plot-toolbar .ic {
    width: 23px;
    height: 23px;
}
.plot-toolbar .op-text {
    height: 11px;
    margin-top: 2px;
    font-size: 10px;
}
.plot-toolbar .op-text i {
    width: 4px;
    height: 6px;
    margin: 1px 1px 0;
}
.plot-toolbar .op-ic {
    width: 23px;
    height: 12px;
}
.pl-add { width: 33px; padding-bottom: 3px; }
.pl-ops { width: 66px; padding-bottom: 3px; }
.pl-del { width: 45px; padding-bottom: 3px; }
.pl-hide { width: 66px; padding-bottom: 3px; }
.pl-draw { width: 39px; padding-bottom: 3px; }
.tb-raised {
    background-color: #dcd9d2;
    border: 1px solid;
    border-color: #f6f4ef #77736c #77736c #f6f4ef;
}
.plots .plot-list {
    height: 287px;
    margin: 6px 2px 3px 1px;
}
.plot-item {
    display: flex;
    align-items: center;
    height: 23px;
    color: #ffffff;
    background-color: #000a78;
}
.plot-play {
    flex: none;
    display: flex;
    align-items: center;
    justify-content: center;
    width: 22px;
    height: 100%;
    border-right: 1px solid #fff;
}
.plot-play i {
    border: 7px solid transparent;
    border-left: 9px solid #fff;
    border-right: 0;
}
.plot-eye {
    flex: none;
    display: flex;
    align-items: center;
    width: 21px;
    height: 100%;
    margin-right: 1px;
    padding-left: 2px;
    border-right: 1px solid #fff;
}
.plot-eye i {
    width: 11px;
    height: 11px;
    background-color: #ccc;
    border-radius: 50%;
}
.plot-eye i + i {
    margin-left: -5px;
    background-color: #555;
}
.apply-row {
    display: flex;
    align-items: center;
    height: 21.5px;
    margin-left: -1px;
}
.apply-label {
    width: 102px;
}
.radio-b {
    margin-left: 15px;
}
.actions {
    display: flex;
    justify-content: flex-end;
    gap: 5px;
    margin: 17px 3px 0 0;
}
.push {
    width: 67px;
    height: 20px;
    padding: 0;
    background-color: #d4d0c8;
    border: 1px solid;
    border-color: #f6f4ef #333 #333 #f6f4ef;
}
.push.off {
    border-color: #f6f4ef #77736c #77736c #f6f4ef;
}
.statusbar {
    display: flex;
    height: 31px;
    margin-top: 4px;
    border-top: 1px solid #8c8880;
}
.status-field {
    flex: 1;
    border-right: 1px solid #f6f4ef;
    border-bottom: 2px solid #f6f4ef;
}
.status-info {
    display: flex;
    align-items: center;
    justify-content: center;
    width: 30px;
    border: 1px solid;
    border-color: #f6f4ef #333 #333 #f6f4ef;
}
.status-info i {
    width: 15px;
    height: 14px;
    text-align: center;
    font: bold 10px/13px "Liberation Sans", sans-serif;
    color: #1040a0;
    background-color: #d8e8f8;
    border: 1px solid #1860c8;
}

/* viewer toolbars */
.vbar {
    display: flex;
    align-items: center;
    height: 26px;
    padding-left: 2px;
    border-bottom: 1px solid #9a968e;
}
.vbar + .vbar {
    padding-top: 3px;
    box-shadow: inset 0 1px 0 #f4f2ec;
}
.vc {
    flex: none;
    position: relative;
    display: flex;
    align-items: center;
    justify-content: center;
    width: 24px;
    height: 24px;
}
.vbar + .vbar .vc,
.vbar + .vbar .grip {
    height: 22px;
}
.vc svg {
    width: 20px;
    height: 20px;
}
.vc.on {
    background-color: #ecebe6;
    box-shadow: inset 1px 1px 0 #8c8880;
}
.vc.nav b {
    position: absolute;
    right: 2px;
    bottom: 0;
    font: bold 7px "Liberation Sans", sans-serif;
}
.grip {
    flex: none;
    position: relative;
    width: 13px;
    height: 24px;
    border-left: 1px solid #f4f2ec;
}
.grip::after {
    content: "";
    position: absolute;
    left: 5px;
    top: 2px;
    width: 4px;
    height: 18px;
    border: 1px solid #9a968e;
    border-width: 0 1px;
}
.grip-first {
    width: 9px;
    border-left: 0;
}
.grip-first::after {
    left: 1px;
}

/* plot canvas */
.canvas {
    position: relative;
    height: 711px;
    background-color: #ffffff;
    font-family: "Liberation Sans", sans-serif;
}
.db-title {
    position: absolute;
    left: 38px;
    top: 14px;
    font-size: 24px;
    line-height: 23px;
    color: #111;
    letter-spacing: 0.15px;
    white-space: nowrap;
}
.lg-head, .lg-foot {
    position: absolute;
    left: 38px;
    font-size: 10px;
    line-height: 10px;
    letter-spacing: 0.4px;
    -webkit-text-stroke: 0.3px #111;
    white-space: nowrap;
}
.lg-head {
    top: 71px;
}
.lg-foot {
    top: 238px;
}
.lg-bar {
    position: absolute;
    left: 38px;
    top: 96px;
    width: 30px;
    height: 137px;
    background: linear-gradient(#ff1010, #ffff20 25%, #20ff20 50%, #20ffff 75%, #1010ff);
}
.lg-ticks {
    position: absolute;
    left: 68px;
    top: 91px;
    height: 147px;
    display: flex;
    flex-direction: column;
    justify-content: space-between;
    font-size: 10.5px;
    line-height: 10px;
    letter-spacing: -0.3px;
    -webkit-text-stroke: 0.3px #111;
}
.lg-ticks span {
    display: flex;
    align-items: center;
    gap: 2px;
}
.lg-ticks span::before {
    content: "";
    width: 8px;
    height: 1px;
    background-color: #444;
}
.y-labels {
    position: absolute;
    left: 344px;
    top: 58px;
    height: 595px;
    display: flex;
    flex-direction: column;
    justify-content: space-between;
    font-size: 10.5px;
    line-height: 10px;
    color: #444;
}
.y-title {
    position: absolute;
    left: 345px;
    top: 348px;
    font-size: 8.5px;
    color: #555;
}
.data-bar {
    position: absolute;
    left: 366px;
    top: 62px;
    width: 30px;
    height: 587px;
    background:
        repeating-linear-gradient(#222 0 1px, transparent 1px 11.7px) left top / 4px 100% no-repeat,
        linear-gradient(#1a70e8, #0c20ff 3.6%, #20ffff 8%, #20ff20 13.5%, #ffff20 23%, #ff9020 35%, #ff1020 47%, #ff1020);
    border-left: 1px solid #222;
    border-right: 1px solid #666;
    border-bottom: 2px solid #111;
}
.x-labels {
    position: absolute;
    left: 344px;
    top: 649px;
    font-size: 10.5px;
    line-height: 11px;
    letter-spacing: -0.5px;
    color: #333;
    white-space: nowrap;
}
.x-title {
    position: absolute;
    left: 348px;
    top: 656px;
    font-size: 8.5px;
    line-height: 11px;
    letter-spacing: 0.5px;
    color: #444;
    white-space: nowrap;
}
.triad-y {
    position: absolute;
    left: 75px;
    top: 581px;
    width: 1px;
    height: 58px;
    background-color: #333;
}
.triad-x {
    position: absolute;
    left: 75px;
    top: 638px;
    width: 61px;
    height: 1px;
    background-color: #333;
}
.triad-lbl {
    position: absolute;
    font-size: 13px;
    font-style: italic;
    line-height: 14px;
    -webkit-text-stroke: 0.4px #111;
}
.lbl-y { left: 77px; top: 564px; }
.lbl-z { left: 85px; top: 630px; }
.lbl-x { left: 146px; top: 630px; }
.user-info {
    position: absolute;
    left: 571px;
    top: 676px;
    font-size: 12px;
    line-height: 12px;
    letter-spacing: 0.3px;
    -webkit-text-stroke: 0.2px #111;
    white-space: nowrap;
}

/* dock clipped by the bottom of the picture */
.dock {
    position: absolute;
    left: 704px;
    top: 813px;
    width: 271px;
    height: 20px;
    display: flex;
    align-items: flex-start;
    gap: 9px;
    padding: 6px 0 0 6px;
    overflow: hidden;
    background-color: #ededeb;
}
.d-folder {
    flex: none;
    width: 31px;
    height: 22px;
    background-color: #8cb8e0;
    border-radius: 3px;
}
.d-sep {
    flex: none;
    width: 1px;
    height: 14px;
    background-color: #bbb;
}
.d-term {
    flex: none;
    width: 30px;
    height: 22px;
    background-color: #333;
    border: 2px solid #999;
}
.d-file {
    flex: none;
    width: 22px;
    height: 22px;
    margin-left: 9px;
    background-color: #e8e8e4;
    border: 1px solid #bbb;
    border-radius: 3px;
}
.d-globe {
    flex: none;
    width: 32px;
    height: 32px;
    margin: -1px 0 0 7px;
    background-color: #c8d8ec;
    border: 2px solid #7a9cc8;
    border-radius: 50%;
}
.d-mag {
    flex: none;
    width: 28px;
    height: 28px;
    margin: -1px 0 0 1px;
    background-color: #f0f0f0;
    border: 3px solid #5a6ea8;
    border-radius: 50%;
}
.d-mag + .d-sep {
    margin-left: 4px;
}
.d-sep + .d-folder {
    margin-left: 2px;
}
.cursor-bot {
    left: 264px;
    top: 385px;
    width: 11px;
    height: 17px;
}
```
